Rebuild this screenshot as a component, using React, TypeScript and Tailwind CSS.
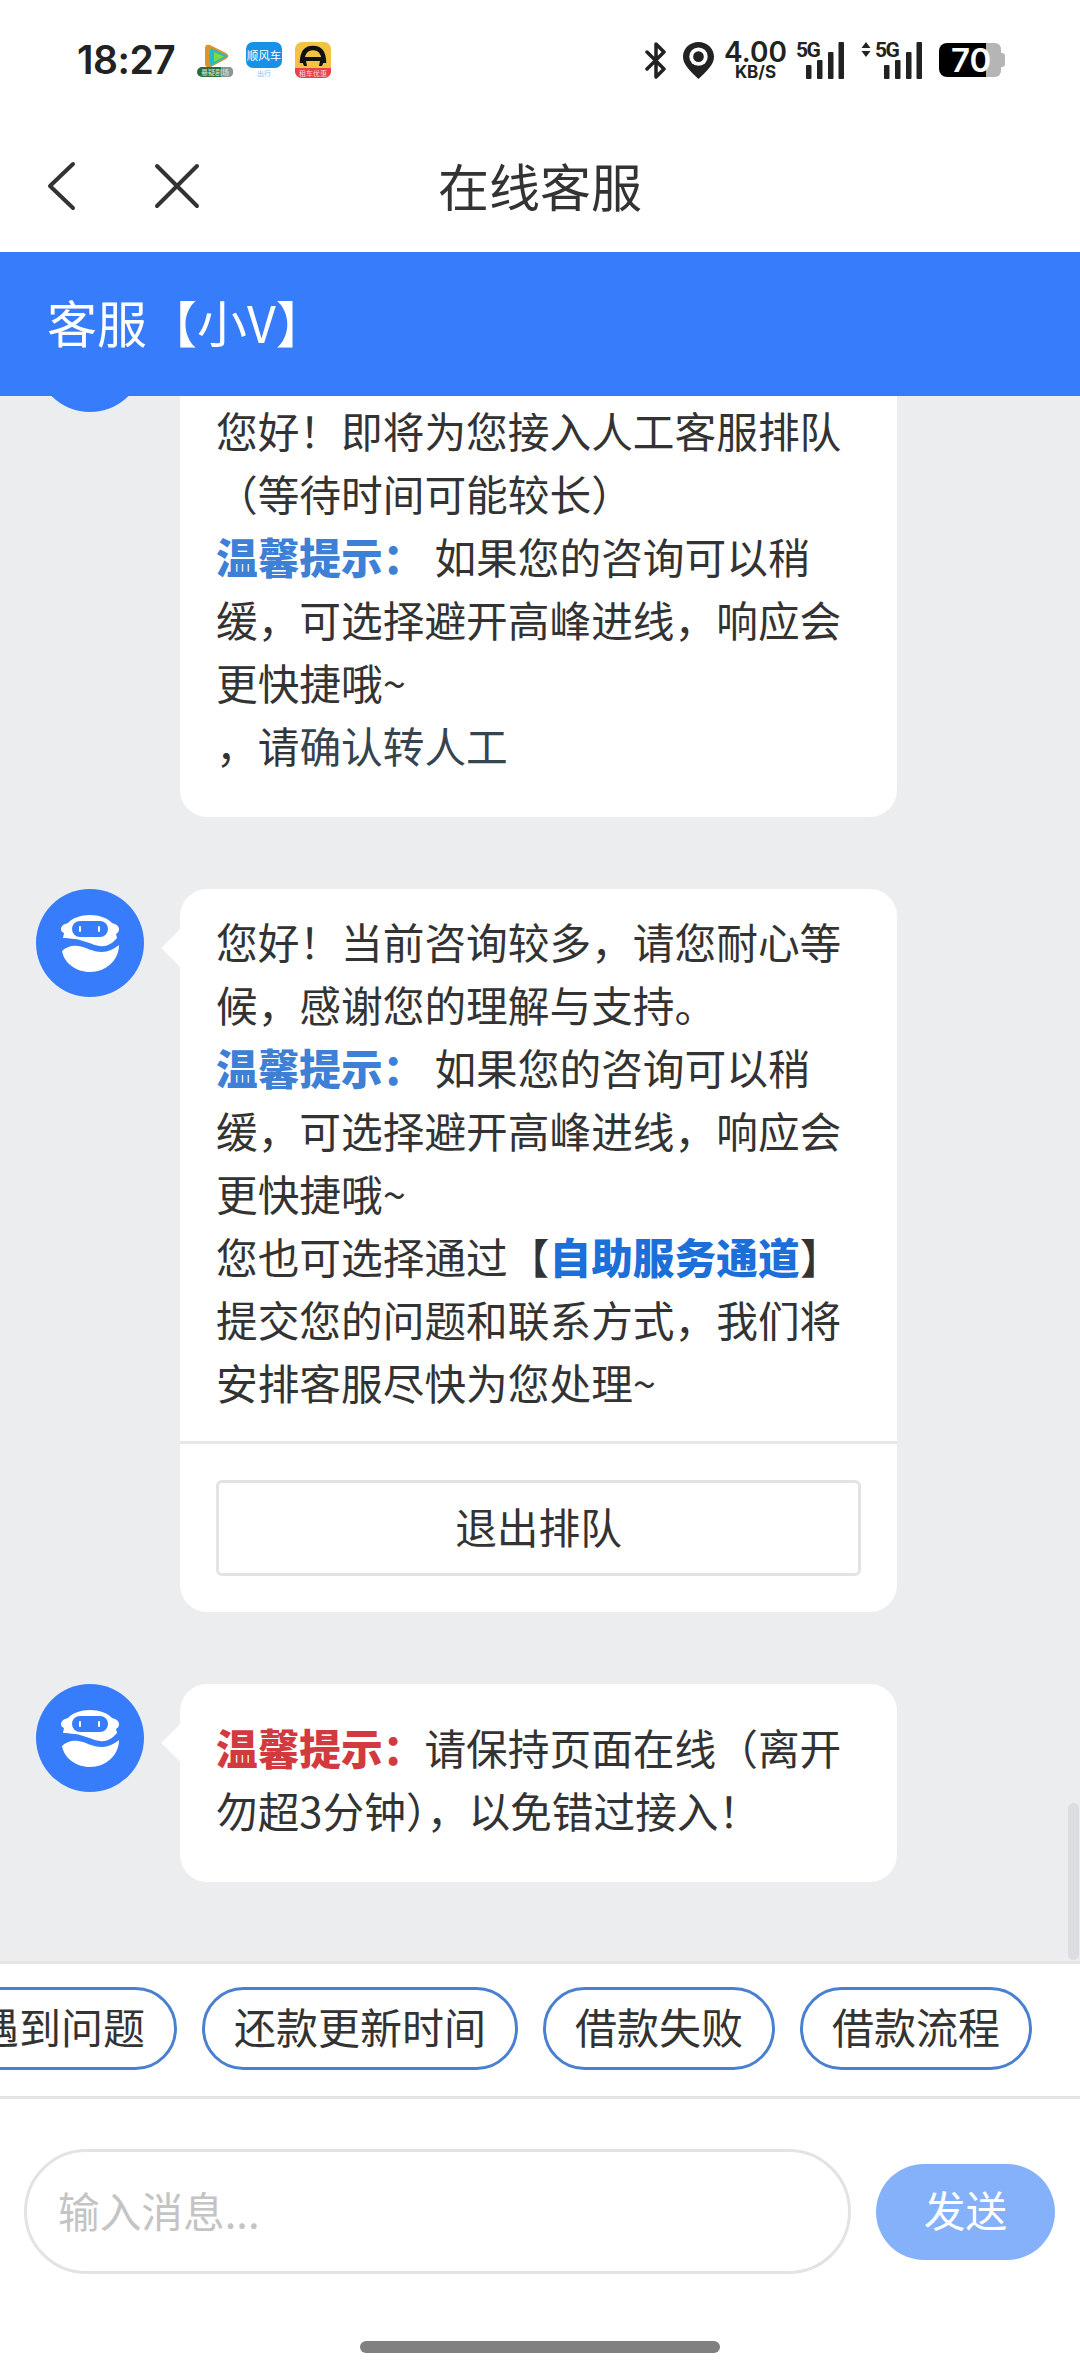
import React from "react"

const RobotAvatar = () => (
  <svg viewBox="0 0 108 108" className="w-[108px] h-[108px] shrink-0">
    <circle cx="54" cy="54" r="54" fill="#377dfb" />
    <path
      d="M32 34C36 29 45 26 54 26C63 26 72 29 76 34C80 35 83 37 83 40C83 42 82 44 80 45L81 49C76 55 70 58 64 57C56 56 48 51 39 50C34 49.500 30 49 27 49L28 44C26 43 25 42 25 40C25 37 28 35 32 34Z"
      fill="#fff"
    />
    <rect x="36" y="32" width="36" height="16" rx="8" fill="#377dfb" />
    <rect x="43" y="37" width="2" height="6" rx="1" fill="#fff" />
    <rect x="62" y="37" width="2" height="6" rx="1" fill="#fff" />
    <path
      d="M26 62C30 58 36 56 42 57C50 58 56 63 66 63C72 63 78 60 83 56C83 71 70 83 54 83C40 83 28 74 26 62Z"
      fill="#fff"
    />
  </svg>
)

const Bars = () => (
  <svg viewBox="0 0 38 37" className="w-[38px] h-[37px]">
    <rect x="0" y="23" width="5.5" height="14" rx="1" fill="#222" />
    <rect x="11" y="18" width="5.5" height="19" rx="1" fill="#222" />
    <rect x="22" y="10" width="5.5" height="27" rx="1" fill="#222" />
    <rect x="32.5" y="0" width="5.5" height="37" rx="1" fill="#222" />
  </svg>
)

const AppIcons = () => (
  <div className="flex items-center ml-[22px] gap-[13px]">
    <svg viewBox="0 0 36 36" className="w-[36px] h-[36px]">
      <path d="M8 6C8 3 10 2 13 3L29 11C32 13 32 15 29 17L14 25C11 26 8 25 8 22Z" fill="#d9942a" />
      <path d="M14 6L31 14L14 24C12 20 12 10 14 6Z" fill="#27b9c7" />
      <path d="M17 10L27 14.500L17 20Z" fill="#7cdc3c" />
      <rect x="0" y="25" width="36" height="10" rx="5" fill="#2f6a3f" />
      <path d="M24 25H32C35 25 36 27 36 30C36 33 34 35 31 35H24Z" fill="#8b9698" />
      <text x="18" y="33" textAnchor="middle" fontSize="7" fill="#d8efd8">
        悬疑剧场
      </text>
    </svg>
    <svg viewBox="0 0 36 36" className="w-[36px] h-[36px]">
      <rect x="0" y="0" width="36" height="26" rx="7" fill="#1592e8" />
      <text x="18" y="18" textAnchor="middle" fontSize="11.500" fill="#fff">
        顺风车
      </text>
      <text x="18" y="34" textAnchor="middle" fontSize="7" fill="#7cc0ee">
        出行
      </text>
    </svg>
    <svg viewBox="0 0 36 36" className="w-[36px] h-[36px]">
      <rect x="0" y="0" width="36" height="36" rx="7" fill="#f3c243" />
      <path d="M0 26H36V29C36 33 33 36 29 36H7C3 36 0 33 0 29Z" fill="#e8404c" />
      <path
        d="M7 21C7 11 11 6 18 6C25 6 29 11 29 21"
        fill="none"
        stroke="#111"
        strokeWidth="4.500"
      />
      <rect x="6" y="15" width="24" height="4" fill="#111" />
      <path d="M7 19H11L12 24H9ZM25 19H29L27 24H24Z" fill="#111" />
      <text x="18" y="34" textAnchor="middle" fontSize="7" fill="#fbd9d9">
        租车优惠
      </text>
    </svg>
  </div>
)

const StatusRight = () => (
  <div className="ml-auto mr-[75px] flex items-center h-[37px] font-['Inter',sans-serif] text-[#222]">
    <svg viewBox="0 0 24 37" className="w-[24px] h-[37px]">
      <path
        d="M3 10L20 27L12 35V2L20 10L3 27"
        fill="none"
        stroke="#222"
        strokeWidth="3.500"
        strokeLinecap="round"
        strokeLinejoin="round"
      />
    </svg>
    <svg viewBox="0 0 32 38" className="w-[31px] h-[37px] ml-[15px]">
      <path d="M16 0C25 0 32 7 32 15C32 24 23 31 16 38C9 31 0 24 0 15C0 7 7 0 16 0Z" fill="#222" />
      <circle cx="16" cy="15" r="9.500" fill="#fff" />
      <circle cx="16" cy="15" r="5.500" fill="#222" />
    </svg>
    <div className="ml-[13px] w-[57px] flex flex-col items-center">
      <span className="text-[28px] leading-[22px] font-semibold">4.00</span>
      <span className="text-[17px] leading-[14px] mt-[2px] font-bold">KB/S</span>
    </div>
    <div className="relative ml-[12px] w-[48px] h-[37px]">
      <span className="absolute left-0 top-[-3px] text-[21px] leading-[22px] font-bold font-['Roboto',sans-serif] tracking-[-1.5px]">
        5G
      </span>
      <div className="absolute left-[10px] top-0">
        <Bars />
      </div>
    </div>
    <div className="relative ml-[17px] w-[62px] h-[37px]">
      <svg viewBox="0 0 10 15" className="absolute left-0 top-0 w-[10px] h-[15px]">
        <path d="M5 0L9.500 6H0.500ZM5 15L0.500 9H9.500Z" fill="#222" />
      </svg>
      <span className="absolute left-[14px] top-[-3px] text-[21px] leading-[22px] font-bold font-['Roboto',sans-serif] tracking-[-1.5px]">
        5G
      </span>
      <div className="absolute left-[23px] top-0">
        <Bars />
      </div>
    </div>
    <div className="relative ml-[16px] w-[66px] h-[34px]">
      <div className="absolute left-0 top-0 w-[47px] h-[34px] bg-black rounded-l-[8px]" />
      <div className="absolute left-[47px] top-0 w-[15px] h-[34px] bg-[#b5b5b5] rounded-r-[6px]" />
      <div className="absolute left-[62px] top-[10px] w-[4px] h-[14px] bg-[#b5b5b5] rounded-r-[3px]" />
      <span className="absolute left-[12px] top-[-1px] text-[33px] leading-[36px] font-semibold text-white">
        70
      </span>
    </div>
  </div>
)

const Tip = ({ color, children }: { color: string; children: React.ReactNode }) => (
  <span className={`font-black ${color}`}>{children}</span>
)

const Tail = () => (
  <div className="absolute left-[-13px] top-[45px] w-[28px] h-[28px] bg-white rotate-45" />
)

const chips = ["遇到问题", "还款更新时间", "借款失败", "借款流程"]

export default function App() {
  return (
    <div className="w-[1080px] h-[2374px] bg-white flex flex-col overflow-hidden font-['Noto_Sans_CJK_SC',sans-serif] text-[#333]">
      <div className="h-[120px] shrink-0 flex items-center pl-[77px]">
        <span className="font-['Inter',sans-serif] text-[39px] font-semibold text-[#222] tracking-[-0.5px]">
          18:27
        </span>
        <AppIcons />
        <StatusRight />
      </div>

      <div className="relative h-[132px] shrink-0 flex items-center justify-center">
        <svg viewBox="0 0 30 50" className="absolute left-[47px] top-[41px] w-[30px] h-[50px]">
          <path
            d="M26 3L3 25L26 47"
            fill="none"
            stroke="#333"
            strokeWidth="4"
            strokeLinecap="round"
            strokeLinejoin="round"
          />
        </svg>
        <svg viewBox="0 0 46 46" className="absolute left-[154px] top-[43px] w-[46px] h-[46px]">
          <path
            d="M3 3L43 43M43 3L3 43"
            fill="none"
            stroke="#333"
            strokeWidth="4"
            strokeLinecap="round"
          />
        </svg>
        <span className="text-[51px] leading-[60px] pb-[2px]">在线客服</span>
      </div>

      <div className="h-[144px] shrink-0 flex items-center pl-[47px] pb-[6px] bg-[#377dfb] text-white text-[50px] z-10">
        客服【小V】
      </div>

      <div className="relative flex-1 overflow-hidden bg-[#ebedef] pl-[36px] flex flex-col gap-[72px]">
        <div className="flex gap-[36px] -mt-[92px] shrink-0">
          <RobotAvatar />
          <div className="relative w-[717px] bg-white rounded-[27px] px-[36px] pt-[95px] pb-[40px] text-[41.7px] leading-[63px]">
            您好！即将为您接入人工客服排队（等待时间可能较长）
            <br />
            <Tip color="text-[#3d80d6]">温馨提示：</Tip>
            <span className="ml-[10px]">如果您的咨询可以稍缓，可选择避开高峰进线，响应会更快捷哦~</span>
            <br />
            ，请<span className="text-[#35454f]">确认转人工</span>
          </div>
        </div>

        <div className="flex gap-[36px] shrink-0">
          <RobotAvatar />
          <div className="relative w-[717px] bg-white rounded-[27px] text-[41.7px] leading-[63px]">
            <Tail />
            <div className="relative px-[36px] pt-[21px] pb-[27px]">
              您好！当前咨询较多，请您耐心等候，感谢您的理解与支持。
              <br />
              <Tip color="text-[#3d80d6]">温馨提示：</Tip>
              <span className="ml-[10px]">如果您的咨询可以稍缓，可选择避开高峰进线，响应会更快捷哦~</span>
              <br />
              您也可选择通过【<Tip color="text-[#1c6ed8]">自助服务通道</Tip>】提交您的问题和联系方式，我们将安排客服尽快为您处理~
            </div>
            <div className="border-t-[3px] border-[#e8e8e8] px-[36px] pt-[36px] pb-[36px]">
              <button className="w-full h-[96px] border-[3px] border-[#e3e3e3] rounded-[6px] text-[41.7px] pb-[4px]">
                退出排队
              </button>
            </div>
          </div>
        </div>

        <div className="flex gap-[36px] shrink-0">
          <RobotAvatar />
          <div className="relative w-[717px] bg-white rounded-[27px] px-[36px] pt-[32px] pb-[40px] text-[41.7px] leading-[63px]">
            <Tail />
            <div className="relative">
              <Tip color="text-[#d33a3f]">温馨提示：</Tip>
              请保持页面在线（离开勿超3分钟），以免错过接入！
            </div>
          </div>
        </div>

        <div className="absolute right-[1px] bottom-[1px] w-[11px] h-[157px] bg-[#dcdde0] rounded-full" />
      </div>

      <div className="h-[138px] shrink-0 flex items-center justify-end gap-[25px] pr-[48px] pb-[3px] border-y-[3px] border-[#e4e4e4] overflow-hidden">
        {chips.map((chip) => (
          <div
            key={chip}
            className="shrink-0 h-[83px] flex items-center px-[29px] pb-[6px] border-[3px] border-[#4a80d0] rounded-full text-[42px]"
          >
            {chip}
          </div>
        ))}
      </div>

      <div className="flex-none h-[275px] flex flex-col">
        <div className="flex items-center pl-[24px] pt-[50px] gap-[25px]">
          <input
            readOnly
            placeholder="输入消息..."
            className="w-[827px] h-[125px] border-[3px] border-[#e3e3e3] rounded-full pl-[31px] pb-[4px] text-[41.7px] outline-none placeholder:text-[#c4c4c4]"
          />
          <button className="w-[179px] h-[96px] bg-[#85b1fb] text-white rounded-full text-[41.7px] pb-[4px]">
            发送
          </button>
        </div>
        <div className="mt-[67px] mx-auto w-[360px] h-[12px] bg-[#808080] rounded-full" />
      </div>
    </div>
  )
}
